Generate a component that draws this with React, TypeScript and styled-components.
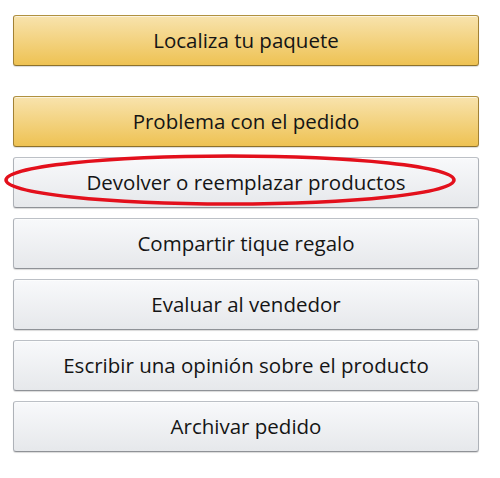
import React from "react";
import styled, { createGlobalStyle } from "styled-components";

const GlobalStyle = createGlobalStyle`
  body {
    margin: 0;
    background: #ffffff;
    font-family: "Open Sans", "Liberation Sans", sans-serif;
  }
`;

const Page = styled.div`
  width: 500px;
  height: 478px;
  padding: 15px 0 0 13px;
  box-sizing: border-box;
  display: flex;
  flex-direction: column;
`;

const Group = styled.div<{ $spaced?: boolean }>`
  display: flex;
  flex-direction: column;
  gap: 10px;
  margin-top: ${(p) => (p.$spaced ? "30px" : "0")};
`;

const ActionButton = styled.button<{ $primary?: boolean }>`
  position: relative;
  width: 466px;
  height: 51px;
  box-sizing: border-box;
  border-radius: 3px;
  border: 1px solid;
  border-color: ${(p) =>
    p.$primary ? "#b0913f #a28134 #8d712b" : "#bcc0c6 #aeb2b8 #8f9297"};
  background: ${(p) =>
    p.$primary
      ? "linear-gradient(to bottom, #f8e3ad, #eec253)"
      : "linear-gradient(to bottom, #f8f9fb, #e6e8eb)"};
  box-shadow: 0 1px 0 rgba(255, 255, 255, 0.6) inset, 0 1px 1px rgba(0, 0, 0, 0.15);
  font-family: "Open Sans", "Liberation Sans", sans-serif;
  font-size: 20.5px;
  color: #151515;
  padding: 0 0 2px;
  cursor: pointer;
  display: flex;
  align-items: center;
  justify-content: center;
`;

const Highlight = styled.svg`
  position: absolute;
  left: -10px;
  top: -5px;
  width: 460px;
  height: 56px;
  overflow: visible;
  pointer-events: none;
`;

const items = [
  "Devolver o reemplazar productos",
  "Compartir tique regalo",
  "Evaluar al vendedor",
  "Escribir una opinión sobre el producto",
  "Archivar pedido",
];

export default function App() {
  return (
    <>
      <GlobalStyle />
      <Page>
        <ActionButton $primary>Localiza tu paquete</ActionButton>
        <Group $spaced>
          <ActionButton $primary>Problema con el pedido</ActionButton>
          {items.map((label, i) => (
            <ActionButton key={label}>
              {label}
              {i === 0 && (
                <Highlight viewBox="0 0 460 56">
                  <ellipse
                    cx="226"
                    cy="27"
                    rx="224"
                    ry="24"
                    fill="none"
                    stroke="#e3101c"
                    strokeWidth="3.5"
                  />
                </Highlight>
              )}
            </ActionButton>
          ))}
        </Group>
      </Page>
    </>
  );
}
